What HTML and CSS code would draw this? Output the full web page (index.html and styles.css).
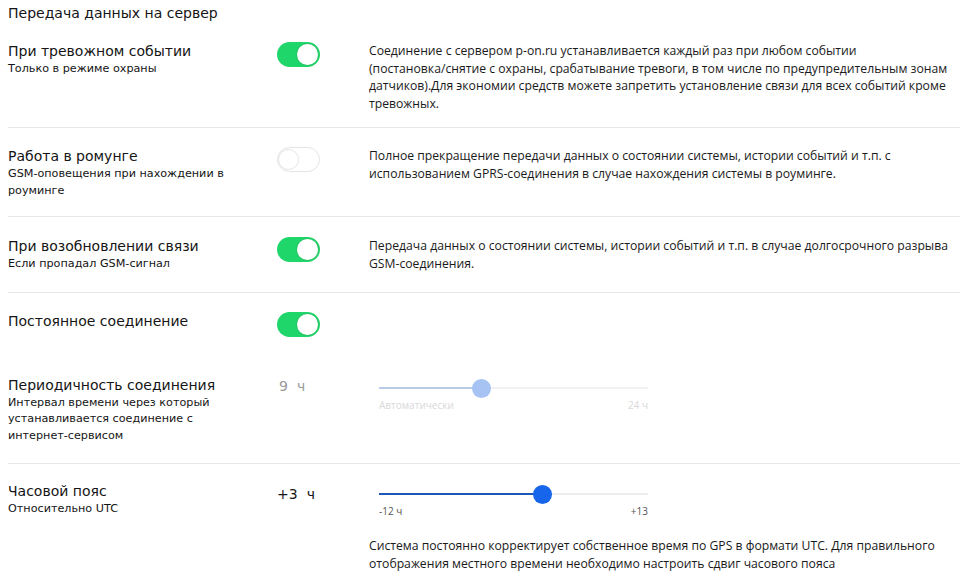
FILE: index.html
```html
<!DOCTYPE html>
<html lang="ru">
<head>
<meta charset="utf-8">
<link rel="stylesheet" href="styles.css">
</head>
<body>
<div class="page">
  <div class="title">Передача данных на сервер</div>

  <div class="row r1 sep">
    <div class="label">
      <div class="name">При тревожном событии</div>
      <div class="hint">Только в режиме охраны</div>
    </div>
    <div class="ctl"><span class="toggle on"><span class="knob"></span></span></div>
    <div class="desc">Соединение с сервером p-on.ru устанавливается каждый раз при любом событии (постановка/&#8288;снятие с охраны, срабатывание тревоги, в том числе по предупредительным зонам датчиков).Для экономии средств можете запретить установление связи для всех событий кроме тревожных.</div>
  </div>

  <div class="row r2 sep">
    <div class="label">
      <div class="name">Работа в ромунге</div>
      <div class="hint">GSM-оповещения при нахождении в роуминге</div>
    </div>
    <div class="ctl"><span class="toggle off"><span class="knob"></span></span></div>
    <div class="desc">Полное прекращение передачи данных о состоянии системы, истории событий и т.п. с использованием GPRS-соединения в случае нахождения системы в роуминге.</div>
  </div>

  <div class="row r3 sep">
    <div class="label">
      <div class="name">При возобновлении связи</div>
      <div class="hint">Если пропадал GSM-сигнал</div>
    </div>
    <div class="ctl"><span class="toggle on"><span class="knob"></span></span></div>
    <div class="desc">Передача данных о состоянии системы, истории событий и т.п. в случае долгосрочного разрыва GSM-соединения.</div>
  </div>

  <div class="row r4">
    <div class="label">
      <div class="name">Постоянное соединение</div>
    </div>
    <div class="ctl"><span class="toggle on"><span class="knob"></span></span></div>
  </div>

  <div class="row r5 sep">
    <div class="label">
      <div class="name">Периодичность соединения</div>
      <div class="hint">Интервал времени через который устанавливается соединение с интернет-сервисом</div>
    </div>
    <div class="ctl"><span class="value muted">9<span class="unit">ч</span></span></div>
    <div class="slider-wrap">
      <div class="slider muted">
        <div class="track"><div class="fill" style="width: 102px"></div></div>
        <span class="thumb" style="left: 102px"></span>
      </div>
      <div class="scale muted"><span>Автоматически</span><span>24 ч</span></div>
    </div>
  </div>

  <div class="row r6">
    <div class="label">
      <div class="name">Часовой пояс</div>
      <div class="hint">Относительно UTC</div>
    </div>
    <div class="ctl"><span class="value strong">+3<span class="unit">ч</span></span></div>
    <div class="slider-wrap">
      <div class="slider">
        <div class="track"><div class="fill" style="width: 163px"></div></div>
        <span class="thumb" style="left: 163px"></span>
      </div>
      <div class="scale"><span>-12 ч</span><span>+13</span></div>
    </div>
    <div class="desc desc-below">Система постоянно корректирует собственное время по GPS в формати UTC. Для правильного отображения местного времени необходимо настроить сдвиг часового пояса</div>
  </div>
</div>
</body>
</html>
```

FILE: styles.css
```css
* { box-sizing: border-box; }
html, body { margin: 0; padding: 0; background: #fff; }
body {
  font-family: "DejaVu Sans", "Noto Sans", sans-serif;
  color: #151515;
}
.page {
  width: 960px;
  padding: 0 0 0 8px;
}
.title {
  font-size: 14px;
  line-height: 18px;
  padding-top: 4px;
  height: 28px;
}
.row {
  display: grid;
  grid-template-columns: 269px 92px 1fr;
  align-items: start;
}
.sep { border-bottom: 1px solid #e6e6e6; }
.r1 { padding: 14px 0 15px; }
.r2 { padding: 19px 0 17px; }
.r3 { padding: 20px 0 19px; }
.r4 { padding: 19px 0 20px; }
.r5 { padding: 19px 0 19px; }
.r6 { padding: 18px 0 0; }

.name {
  font-size: 14px;
  line-height: 18px;
}
.hint {
  font-size: 11.2px;
  line-height: 16.5px;
  max-width: 232px;
  margin-top: 1px;
}
.ctl { padding-top: 0; }
.desc {
  font-family: "Open Sans", "Noto Sans", sans-serif;
  font-size: 12.2px;
  line-height: 17.6px;
  color: #1a1a1a;
  width: 590px;
}
.desc-below {
  grid-column: 3;
  margin-top: 19px;
}

.toggle {
  display: block;
  position: relative;
  width: 43px;
  height: 25px;
  border-radius: 13px;
}
.toggle.on { background: #1fd66a; }
.toggle.off { background: #fff; border: 1.5px solid #e4e4e4; }
.knob {
  position: absolute;
  top: 2px;
  width: 21px;
  height: 21px;
  border-radius: 50%;
  background: #fff;
}
.toggle.on .knob { right: 2px; box-shadow: 0 0 0 1px #27c765; }
.toggle.off .knob { left: 0; top: 0.5px; border: 1.5px solid #e4e4e4; width: 21px; height: 21px; }

.value {
  display: inline-block;
  font-size: 14px;
  line-height: 18px;
  margin-top: 1px;
}
.value .unit { margin-left: 9px; }
.value.muted { color: #9a9a9a; padding-left: 2px; }
.value.strong { margin-top: 3px; }

.slider-wrap {
  margin-left: 10px;
  width: 269px;
  padding-top: 3px;
}
.slider {
  position: relative;
  height: 18px;
}
.track {
  position: absolute;
  left: 0; right: 0;
  top: 8px;
  height: 2px;
  background: #ececec;
}
.fill { height: 2px; background: #1d56b8; }
.slider .thumb {
  position: absolute;
  top: 0;
  width: 19px;
  height: 19px;
  margin-left: -9px;
  border-radius: 50%;
  background: #1665ea;
}
.slider.muted .track { background: #f2f2f2; }
.slider.muted .fill { background: #b9cbe6; }
.slider.muted .thumb { background: #a6c3f4; }
.scale {
  display: flex;
  justify-content: space-between;
  font-family: "Open Sans", "Noto Sans", sans-serif;
  font-size: 10px;
  line-height: 14px;
  color: #555;
  margin-top: 1px;
}
.scale.muted { color: #d8d8d8; }
```
